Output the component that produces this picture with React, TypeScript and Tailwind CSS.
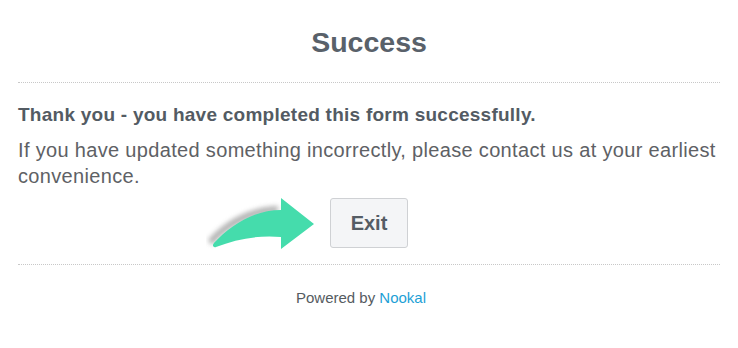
import React from "react";

function SwooshArrow() {
  return (
    <svg
      width="115"
      height="58"
      viewBox="0 0 115 58"
      className="absolute left-[-124px] top-[-3px]"
    >
      <defs>
        <filter id="blur" x="-20%" y="-50%" width="140%" height="200%">
          <feGaussianBlur stdDeviation="2.4" />
        </filter>
      </defs>
      <path
        d="M2 45 C 20 25, 45 12, 72 11 L 72 17 C 45 19, 22 32, 6 50 Z"
        fill="#7a7a7a"
        opacity="0.6"
        filter="url(#blur)"
      />
      <path
        d="M75 3 L108 29 L75 54 L75 42 C 52 40, 30 44, 10 52 C 7 53, 6 50, 8 48 C 25 30, 48 15, 75 15 Z"
        fill="#45dcac"
      />
    </svg>
  );
}

export default function App() {
  return (
    <div className="w-[738px] h-[348px] bg-white px-[18px] font-['Liberation_Sans',Arial,sans-serif]">
      <div className="pt-[27px] pb-[25px] border-b border-dotted border-[#c8c8c8] text-center">
        <h1 className="text-[28.5px] leading-[30px] font-bold text-[#59616a]">Success</h1>
      </div>

      <div className="border-b border-dotted border-[#c8c8c8] pb-[16px]">
        <p className="mt-[20px] text-[19px] leading-[24px] tracking-[0.25px] font-bold text-[#535b63]">
          Thank you - you have completed this form successfully.
        </p>
        <p className="mt-[10px] text-[20px] leading-[26px] tracking-[0.33px] text-[#5e6165]">
          If you have updated something incorrectly, please contact us at your earliest
          convenience.
        </p>
        <div className="mt-[9px] flex justify-center">
          <div className="relative">
            <SwooshArrow />
            <button className="w-[78px] h-[50px] rounded-[3px] border border-[#cfd1d4] bg-[#f4f5f7] text-[20px] font-bold text-[#555d65]">
              Exit
            </button>
          </div>
        </div>
      </div>

      <div className="pt-[23px] pr-[16px] text-center text-[15px] leading-[20px] text-[#555b61]">
        Powered by <a className="text-[#1d9fd6]">Nookal</a>
      </div>
    </div>
  );
}
